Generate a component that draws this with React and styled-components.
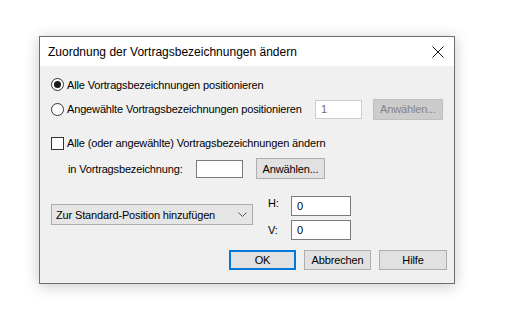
import styled, { createGlobalStyle } from "styled-components";

const GlobalStyle = createGlobalStyle`
  html, body {
    margin: 0;
    padding: 0;
    background: #ffffff;
  }
  body {
    font-family: "Liberation Sans", Arial, sans-serif;
  }
`;

const Page = styled.div`
  width: 520px;
  height: 329px;
  padding: 36px 0 0 39px;
  box-sizing: border-box;
`;

const Dialog = styled.div`
  width: 416px;
  height: 248px;
  box-sizing: border-box;
  border: 1px solid #6e6e6e;
  background: #f0f0f0;
  box-shadow: 0 2px 14px rgba(0, 0, 0, 0.22);
  display: flex;
  flex-direction: column;
`;

const TitleBar = styled.div`
  height: 29px;
  background: #ffffff;
  display: flex;
  align-items: center;
  justify-content: space-between;
  padding: 0 10px 0 8px;
  font-size: 12px;
  color: #000;
`;

const CloseIcon = styled.svg`
  width: 12px;
  height: 12px;
  margin-top: 1px;
`;

const Body = styled.div`
  flex: 1;
  display: flex;
  flex-direction: column;
  padding: 9px 7px 0 11px;
  font-size: 11px;
  letter-spacing: -0.15px;
  color: #000;
`;

const Row = styled.div`
  display: flex;
  align-items: center;
  height: ${(p) => p.$h}px;
  margin-top: ${(p) => p.$mt || 0}px;
  padding-left: ${(p) => p.$pl || 0}px;
`;

const Radio = styled.span`
  width: 11px;
  height: 11px;
  border: 1px solid #333;
  border-radius: 50%;
  background: #fff;
  display: inline-flex;
  align-items: center;
  justify-content: center;
  margin-right: 3px;
  flex-shrink: 0;
  &::after {
    content: "";
    width: 7px;
    height: 7px;
    border-radius: 50%;
    background: ${(p) => (p.$checked ? "#1a1a1a" : "transparent")};
  }
`;

const Check = styled.span`
  width: 11px;
  height: 11px;
  border: 1px solid #333;
  background: #fff;
  margin-right: 3px;
  flex-shrink: 0;
`;

const Label = styled.span`
  white-space: nowrap;
  width: ${(p) => (p.$w ? `${p.$w}px` : "auto")};
  flex-shrink: 0;
`;

const Field = styled.div`
  box-sizing: border-box;
  width: ${(p) => p.$w}px;
  height: ${(p) => p.$h || 19}px;
  border: 1px solid ${(p) => (p.$disabled ? "#cccccc" : "#7a7a7a")};
  background: #fff;
  color: ${(p) => (p.$disabled ? "#6d6d6d" : "#000")};
  display: flex;
  align-items: center;
  padding-left: 5px;
  margin-left: ${(p) => p.$ml || 0}px;
  flex-shrink: 0;
`;

const Button = styled.div`
  box-sizing: border-box;
  width: ${(p) => p.$w}px;
  height: ${(p) => p.$h || 21}px;
  margin-left: ${(p) => p.$ml || 0}px;
  border: ${(p) => (p.$default ? "2px solid #0078d7" : p.$disabled ? "1px solid #bfbfbf" : "1px solid #adadad")};
  background: ${(p) => (p.$disabled ? "#cccccc" : "#e1e1e1")};
  color: ${(p) => (p.$disabled ? "#838383" : "#000")};
  display: flex;
  align-items: center;
  justify-content: center;
  flex-shrink: 0;
`;

const OptionsRow = styled.div`
  display: flex;
  margin-top: 17px;
`;

const Select = styled.div`
  box-sizing: border-box;
  width: 202px;
  height: 21px;
  margin-top: 8px;
  border: 1px solid #adadad;
  background: #e5e5e5;
  display: flex;
  align-items: center;
  justify-content: space-between;
  padding: 0 5px 0 4px;
`;

const Chevron = styled.svg`
  width: 9px;
  height: 6px;
`;

const Offsets = styled.div`
  display: grid;
  grid-template-columns: 23px 60px;
  row-gap: 4px;
  align-items: center;
  margin-left: 15px;
`;

const OffsetLabel = styled.span`
  align-self: start;
  margin-top: 1px;
`;

const Footer = styled.div`
  display: flex;
  justify-content: flex-end;
  margin-top: 10px;
`;

export default function App() {
  return (
    <>
      <GlobalStyle />
      <Page>
        <Dialog>
          <TitleBar>
            <span>Zuordnung der Vortragsbezeichnungen ändern</span>
            <CloseIcon viewBox="0 0 12 12">
              <path d="M0.5 0.5 L11.5 11.5 M11.5 0.5 L0.5 11.5" stroke="#111" strokeWidth="1" />
            </CloseIcon>
          </TitleBar>
          <Body>
            <Row $h={19}>
              <Radio $checked />
              <Label>Alle Vortragsbezeichnungen positionieren</Label>
            </Row>
            <Row $h={24} $mt={3}>
              <Radio />
              <Label $w={248}>Angewählte Vortragsbezeichnungen positionieren</Label>
              <Field $w={47} $disabled>1</Field>
              <Button $w={70} $ml={11} $disabled>Anwählen...</Button>
            </Row>
            <Row $h={18} $mt={13}>
              <Check />
              <Label>Alle (oder angewählte) Vortragsbezeichnungen ändern</Label>
            </Row>
            <Row $h={21} $mt={6} $pl={17}>
              <Label $w={128}>in Vortragsbezeichnung:</Label>
              <Field $w={47} $h={18} />
              <Button $w={69} $ml={13}>Anwählen...</Button>
            </Row>
            <OptionsRow>
              <Select>
                <span>Zur Standard-Position hinzufügen</span>
                <Chevron viewBox="0 0 9 6">
                  <path d="M0.5 0.5 L4.5 4.5 L8.5 0.5" fill="none" stroke="#555" strokeWidth="1" />
                </Chevron>
              </Select>
              <Offsets>
                <OffsetLabel>H:</OffsetLabel>
                <Field $w={60} $h={20}>0</Field>
                <Label>V:</Label>
                <Field $w={60} $h={20}>0</Field>
              </Offsets>
            </OptionsRow>
            <Footer>
              <Button $w={67} $h={20} $default>OK</Button>
              <Button $w={67} $h={20} $ml={8}>Abbrechen</Button>
              <Button $w={68} $h={20} $ml={8}>Hilfe</Button>
            </Footer>
          </Body>
        </Dialog>
      </Page>
    </>
  );
}
